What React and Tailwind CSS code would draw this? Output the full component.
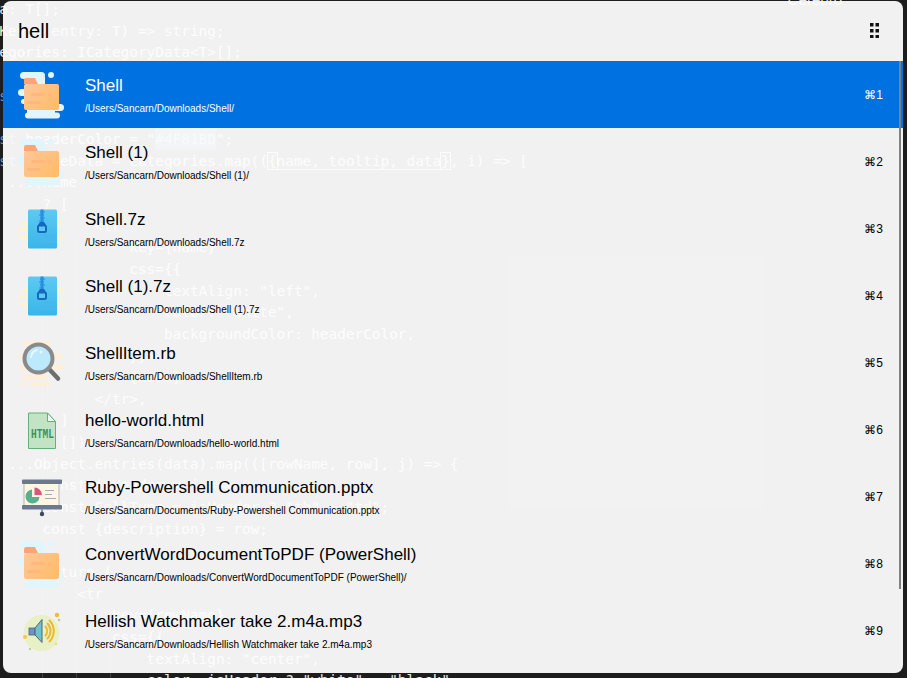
import React from 'react';

const Kw = ({ children }) => <span className="text-[#569cd6]">{children}</span>;
const Attr = ({ children }) => <span className="text-[#ffe9a8]">{children}</span>;
const Brace = ({ children }) => <span className="text-[#ffe9a8] outline-1 outline-[#ffe9a8]">{children}</span>;

// the source file that shows through the launcher
const codeLines = [
  'data: T[];',
  <><Attr>getKey</Attr>: (entry: T) =&gt; string;</>,
  'categories: ICategoryData<T>[];',
  '',
  <Kw>const s</Kw>,
  '',
  <><Kw>const</Kw> headerColor = "<span className="bg-[#3a6ea0]/60 py-[3px] text-[#a9c4dc]">#4F81BD</span>";</>,
  <><Kw>const</Kw> tableData = categories.map((<span className="border-b border-[#c8b878]"><Brace>{'{'}</Brace>name, tooltip, data<Brace>{'}'}</Brace></span>, i) =&gt; [</>,
  '    ...(name',
  '        ? [',
  '              <tr',
  '                  key={name}',
  '                  css={{',
  '                      textAlign: "left",',
  '                      color: "white",',
  '                      backgroundColor: headerColor,',
  '                  }}>',
  '                  {name}',
  '              </tr>,',
  '          ]',
  '        : []),',
  '    ...Object.entries(data).map(([rowName, row], j) => {',
  '        const isHeader = j === 0;',
  '        const CellType = isHeader ? "th" : "td";',
  '        const {description} = row;',
  '',
  '        return (',
  '            <tr',
  '                key={rowName}',
  '                css={{',
  '                    textAlign: "center",',
  '                    color: isHeader ? "white" : "black",',
];

const results = [
  { name: 'Shell', path: '/Users/Sancarn/Downloads/Shell/', icon: 'folder', key: 1 },
  { name: 'Shell (1)', path: '/Users/Sancarn/Downloads/Shell (1)/', icon: 'folder', key: 2 },
  { name: 'Shell.7z', path: '/Users/Sancarn/Downloads/Shell.7z', icon: 'zip', key: 3 },
  { name: 'Shell (1).7z', path: '/Users/Sancarn/Downloads/Shell (1).7z', icon: 'zip', key: 4 },
  { name: 'ShellItem.rb', path: '/Users/Sancarn/Downloads/ShellItem.rb', icon: 'search', key: 5 },
  { name: 'hello-world.html', path: '/Users/Sancarn/Downloads/hello-world.html', icon: 'html', key: 6 },
  { name: 'Ruby-Powershell Communication.pptx', path: '/Users/Sancarn/Documents/Ruby-Powershell Communication.pptx', icon: 'pptx', key: 7 },
  { name: 'ConvertWordDocumentToPDF (PowerShell)', path: '/Users/Sancarn/Downloads/ConvertWordDocumentToPDF (PowerShell)/', icon: 'folder', key: 8 },
  { name: 'Hellish Watchmaker take 2.m4a.mp3', path: '/Users/Sancarn/Downloads/Hellish Watchmaker take 2.m4a.mp3', icon: 'audio', key: 9 },
];

const FolderIcon = ({ id }) => (
  <svg viewBox="0 0 48 48" className="w-12 h-12">
    <defs>
      <linearGradient id={id} x1="0" y1="0" x2="1" y2="0.6">
        <stop offset="0" stopColor="#ffc79c" />
        <stop offset="1" stopColor="#ffbd6c" />
      </linearGradient>
    </defs>
    <g fill="#e1f5fd">
      <rect x="3" y="1" width="25" height="7" rx="3.500" />
      <circle cx="34" cy="4" r="3" />
      <rect x="1" y="18" width="12" height="7" rx="3.500" />
      <rect x="35" y="33" width="12" height="7" rx="3.500" />
      <rect x="4" y="28" width="10" height="5" rx="2.500" />
      <rect x="8" y="41.500" width="35" height="6" rx="3" />
      <rect x="10" y="36" width="28" height="6" />
      <rect x="8" y="6" width="20" height="8" />
    </g>
    <path d="M7 9a2 2 0 0 1 2-2h9l3 6h-14z" fill="#ffa477" />
    <rect x="7" y="13" width="35" height="26" rx="2" fill={`url(#${id})`} />
    <g fill="#ffb77c">
      <rect x="14" y="22" width="14" height="3" rx="1.500" />
      <rect x="10" y="30" width="14" height="3" rx="1.500" />
      <circle cx="33" cy="24" r="2" />
    </g>
  </svg>
);

const ZipIcon = ({ id }) => (
  <svg viewBox="0 0 48 48" className="w-12 h-12">
    <defs>
      <linearGradient id={id} x1="0" y1="0" x2="0" y2="1">
        <stop offset="0" stopColor="#5ccaf2" />
        <stop offset="1" stopColor="#3ab5ea" />
      </linearGradient>
    </defs>
    <g fill="#fdf1d8">
      <rect x="1" y="22" width="14" height="4" rx="2" />
      <rect x="3" y="30" width="12" height="5" rx="2.500" />
      <rect x="30" y="30" width="18" height="5" rx="2.500" />
      <rect x="5" y="16" width="10" height="4" rx="2" />
      <rect x="36" y="16" width="10" height="4" rx="2" />
      <rect x="8" y="38" width="10" height="5" rx="2.500" />
    </g>
    <rect x="11" y="4.500" width="29" height="39" rx="1.500" fill={`url(#${id})`} />
    <rect x="26" y="29" width="14" height="4" rx="2" fill="#45b8ec" />
    <rect x="23" y="34" width="17" height="4" rx="2" fill="#45b8ec" />
    <path d="M23.500 4.500h3v14h-3z" fill="#2a8ee0" />
    <path d="M23 7h5M22 10h5M23 13h5M22 16h5" stroke="#2a8ee0" strokeWidth="1" />
    <path d="M23 17l-2 3h8l-2-3z" fill="#1668bd" />
    <rect x="21" y="20.500" width="8" height="6.500" rx="1.500" fill="#5ccaf2" stroke="#1668bd" strokeWidth="2" />
  </svg>
);

const SearchIcon = () => (
  <svg viewBox="0 0 48 48" className="w-12 h-12">
    <g fill="#fdefdc">
      <rect x="8" y="2" width="26" height="6" rx="3" />
      <rect x="5" y="3" width="4" height="4" rx="2" />
      <rect x="2" y="14" width="44" height="6" rx="3" />
      <rect x="2" y="25" width="46" height="6" rx="3" />
      <rect x="5" y="35" width="26" height="6" rx="3" />
      <circle cx="6" cy="45" r="2.500" />
      <rect x="12" y="43" width="22" height="4" rx="2" />
    </g>
    <path d="M33 31l8 8.500" stroke="#6e6e6e" strokeWidth="4.500" strokeLinecap="round" />
    <circle cx="21.500" cy="19.500" r="14" fill="#bce9fb" stroke="#8a8a8a" strokeWidth="4" />
    <path d="M14 18a8 8 0 0 1 6-7" stroke="#e6f7fd" strokeWidth="2" fill="none" strokeLinecap="round" />
    <circle cx="24" cy="13" r="1.500" fill="#e6f7fd" />
  </svg>
);

const HtmlIcon = () => (
  <svg viewBox="0 0 48 48" className="w-12 h-12">
    <path d="M11.500 7h19l8 8.500v27h-27z" fill="#c2e4c5" stroke="#63b07a" strokeWidth="1" />
    <path d="M30.500 7v8.500h8z" fill="#f1f8f1" stroke="#63b07a" strokeWidth="1" />
    <text
      x="14"
      y="32"
      fontFamily="'Liberation Mono', monospace"
      fontWeight="700"
      fontSize="12.5"
      fill="#3f8f5e"
      textLength="23"
      lengthAdjust="spacingAndGlyphs"
    >
      HTML
    </text>
  </svg>
);

const PptxIcon = () => (
  <svg viewBox="0 0 48 48" className="w-12 h-12">
    <rect x="7" y="10" width="35" height="23" fill="#fcf6e2" stroke="#6d7a90" strokeWidth="0.500" />
    <rect x="5" y="6.500" width="40" height="4.500" rx="1" fill="#6b788f" />
    <rect x="5" y="32" width="40" height="4.500" rx="1" fill="#6b788f" />
    <path d="M25 36.500v3" stroke="#6b788f" strokeWidth="1.500" />
    <circle cx="25" cy="41" r="2.200" fill="#3f4a5e" />
    <path d="M15 16.500a7 7 0 1 0 7.500 7.500h-7.500z" fill="#57b08e" />
    <path d="M17.500 14.500a7.500 7.500 0 0 1 7.500 7.500h-7.500z" fill="#d9557c" />
    <path d="M28 17.500h9M28 21.500h7M28 25.500h11" stroke="#a8adb5" strokeWidth="1.200" />
  </svg>
);

const AudioIcon = () => (
  <svg viewBox="0 0 48 48" className="w-12 h-12">
    <circle cx="24.500" cy="26" r="18" fill="#e8f0c6" />
    <circle cx="40" cy="8" r="2.200" fill="#f6b83c" />
    <circle cx="42" cy="13" r="1.200" fill="#b9cf8c" />
    <circle cx="8" cy="30" r="2" fill="#f9c552" />
    <circle cx="39" cy="37" r="1.200" fill="#f9d678" />
    <circle cx="13" cy="42" r="1.200" fill="#bcd19a" />
    <rect x="12" y="21" width="6" height="7" fill="#6d92c9" stroke="#55617a" strokeWidth="0.800" />
    <path d="M18 21l7-8.500v23l-7-7.500z" fill="#6fc2ca" stroke="#55617a" strokeWidth="1" strokeLinejoin="round" />
    <g fill="none" strokeLinecap="round">
      <path d="M28.500 19.500a7 7 0 0 1 0 9" stroke="#eeb92e" strokeWidth="2" />
      <path d="M30.500 16.500a11 11 0 0 1 0 15" stroke="#eeb92e" strokeWidth="2" />
      <path d="M32.500 13.500a15 15 0 0 1 0 21" stroke="#eeb92e" strokeWidth="2" />
    </g>
  </svg>
);

const icons = {
  folder: FolderIcon,
  zip: ZipIcon,
  search: SearchIcon,
  html: HtmlIcon,
  pptx: PptxIcon,
  audio: AudioIcon,
};

const ResultRow = ({ item, selected }) => {
  const Icon = icons[item.icon];
  return (
    <div className={`h-[67px] flex items-center gap-5 pl-[14px] pr-[20px] ${selected ? 'bg-[#0071e0] text-white' : 'text-black'}`}>
      <div className="w-12 h-12 shrink-0">
        <Icon id={`grad-${item.key}`} />
      </div>
      <div className="flex-1 min-w-0 flex flex-col gap-[7px] pt-[2px]">
        <div className="text-[17px] leading-5">{item.name}</div>
        <div className="text-[10px] leading-3">{item.path}</div>
      </div>
      <div className="text-xs shrink-0">⌘{item.key}</div>
    </div>
  );
};

export default function App() {
  return (
    <div className="grid h-[678px] w-[907px] overflow-hidden bg-[#1d1d1d] font-['Liberation_Sans','Noto_Sans',sans-serif]">
      {/* editor behind the launcher window, all layers share one grid cell */}
      <pre className="col-start-1 row-start-1 -ml-[26.7px] -mt-px text-[14.4px] leading-[21.67px] text-[#e8e8e8] font-['DejaVu_Sans_Mono',monospace]">
        {codeLines.map((line, i) => (
          <div key={i} className="h-[21.67px] whitespace-pre">{line}</div>
        ))}
      </pre>
      <div className="col-start-1 row-start-1 flex items-end gap-[33px] pl-[42px]">
        <div className="w-px h-[478px] bg-[#404040]" />
        <div className="w-px h-[458px] bg-[#404040]" />
        <div className="w-px h-[58px] bg-[#404040]" />
      </div>
      <div className="col-start-1 row-start-1 flex justify-end pr-[65px] -mt-[11px]">
        <span className="text-[15px] leading-[22px] text-[#e8e8e8]">Cerebro</span>
      </div>

      {/* launcher window */}
      <div className="col-start-1 row-start-1 mt-px ml-[3px] w-[900px] h-[672px] rounded-lg overflow-hidden bg-[#fdfdfd]/95">
        <div className="h-[60px] flex items-center justify-between pl-[15px] pr-[24px] pb-px">
          <span className="text-[20px] text-black">hell</span>
          <svg viewBox="0 0 9 15" className="w-[9px] h-[15px]" fill="#111">
            <rect x="0" y="0" width="3.500" height="3.500" />
            <rect x="5.500" y="0" width="3.500" height="3.500" />
            <rect x="0" y="6" width="3.500" height="3.500" />
            <rect x="5.500" y="6" width="3.500" height="3.500" />
            <rect x="0" y="12" width="3.500" height="3.500" />
            <rect x="5.500" y="12" width="3.500" height="3.500" />
          </svg>
        </div>
        <div className="relative">
          {results.map((item, i) => (
            <ResultRow key={item.key} item={item} selected={i === 0} />
          ))}
          {/* scrollbar thumb */}
          <div className="absolute right-[2px] top-0 w-[2px] h-[528px] bg-[#808080]" />
        </div>
      </div>
    </div>
  );
}
